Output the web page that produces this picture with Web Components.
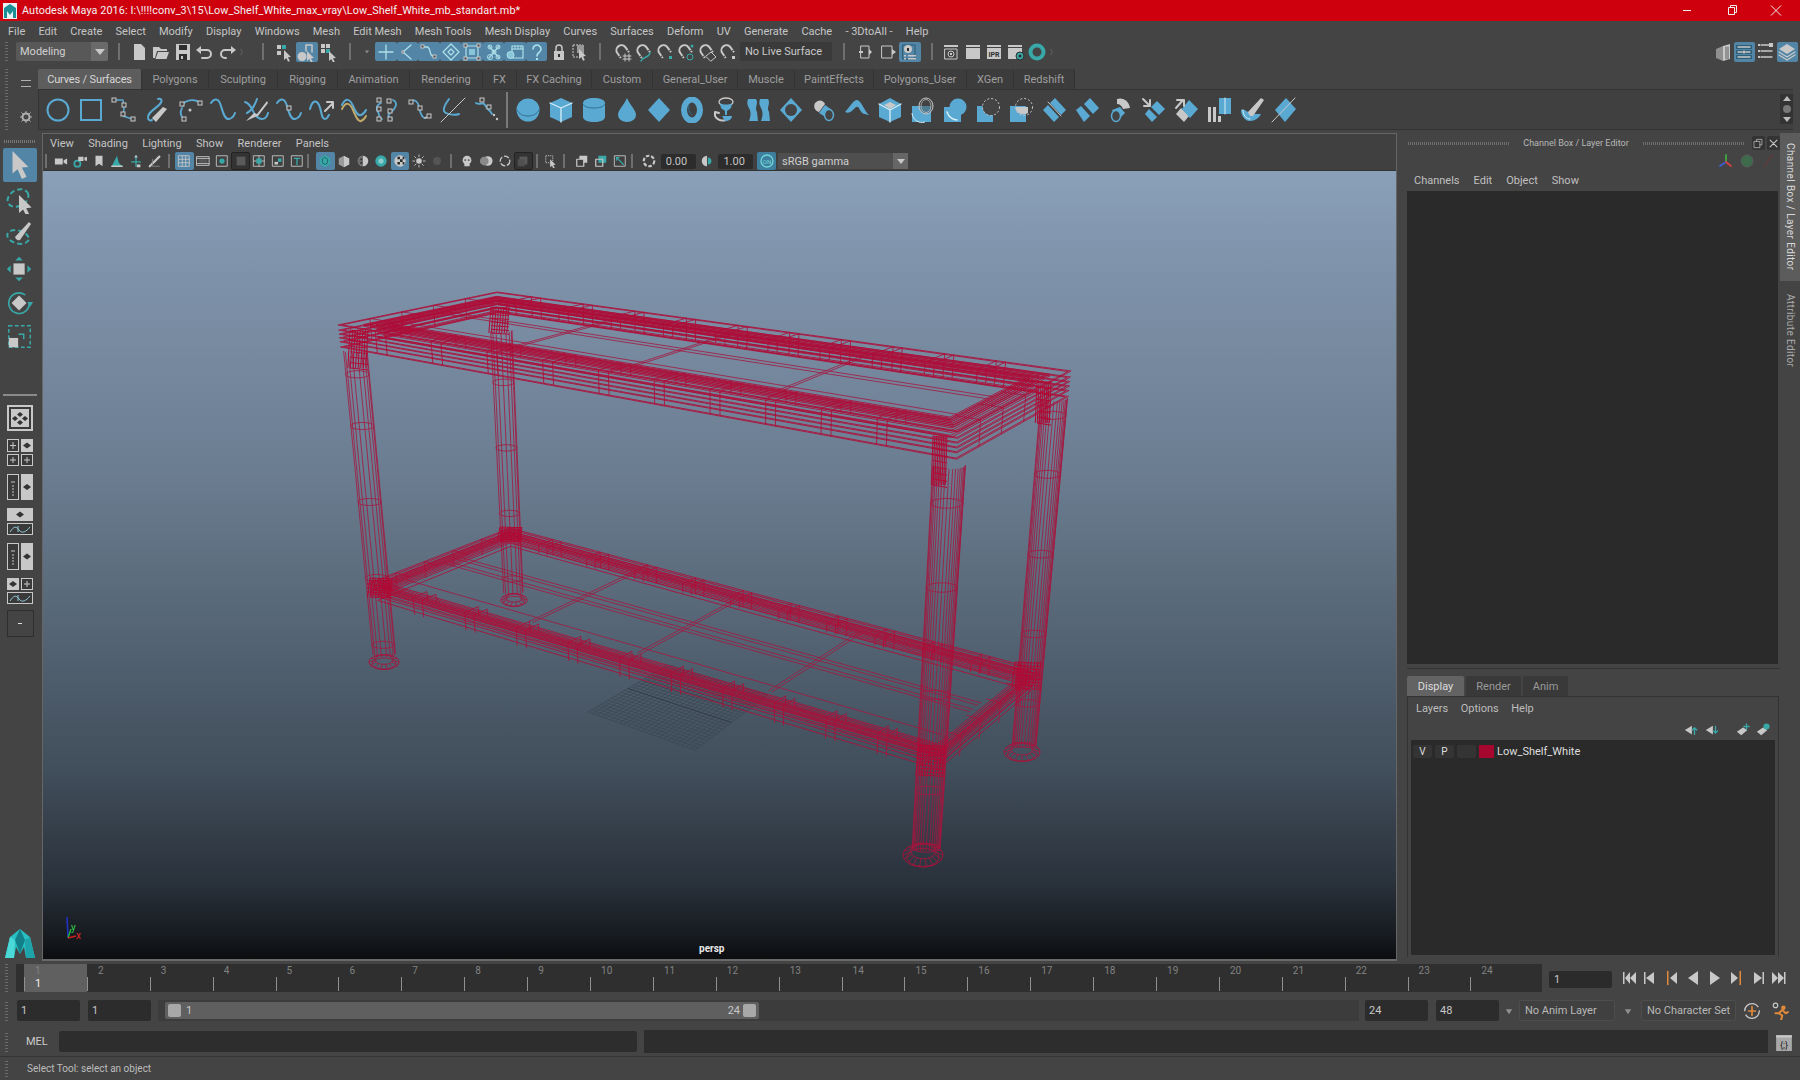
<!DOCTYPE html>
<html>
<head>
<meta charset="utf-8">
<title>Autodesk Maya 2016</title>
<style>
html, body { margin: 0; padding: 0; background: #444; }
body { width: 1800px; height: 1080px; overflow: hidden; font: 11px Roboto, "Liberation Sans", sans-serif; color: #c4c4c4; }
</style>
</head>
<body>
<m-app>
  <m-titlebar slot="title">Autodesk Maya 2016: I:\!!!!conv_3\15\Low_Shelf_White_max_vray\Low_Shelf_White_mb_standart.mb*</m-titlebar>
  <m-menubar slot="menu" items="File,Edit,Create,Select,Modify,Display,Windows,Mesh,Edit Mesh,Mesh Tools,Mesh Display,Curves,Surfaces,Deform,UV,Generate,Cache,- 3DtoAll -,Help"></m-menubar>
  <m-statusline slot="status"></m-statusline>
  <m-shelf slot="shelf"></m-shelf>
  <m-toolbox slot="tools"></m-toolbox>
  <m-viewport slot="view"></m-viewport>
  <m-sidepanel slot="side"></m-sidepanel>
  <m-vtabs slot="vtabs"></m-vtabs>
  <m-timeline slot="time"></m-timeline>
  <m-rangebar slot="range"></m-rangebar>
  <m-cmdline slot="cmd"></m-cmdline>
  <m-helpline slot="help">Select Tool: select an object</m-helpline>
</m-app>

<script>
const L = '#c8c8c8', B = '#5aa9d2', T = '#38a8a8', D = '#2e2e2e', O = '#e08a3c', TL = '#aee0ea';

// small svg builders, everything below is drawn in the icon's own unit box
const st = (d, c = B, w = 2) => `<path d="${d}" fill="none" stroke="${c}" stroke-width="${w}" stroke-linecap="round" stroke-linejoin="round"/>`;
const fl = (d, c = B) => `<path d="${d}" fill="${c}"/>`;
const kn = (x, y, s = 4) => `<rect x="${x}" y="${y}" width="${s}" height="${s}" fill="#444" stroke="${L}" stroke-width="1"/>`;
const cur = (x, y, k = 1) => `<path transform="translate(${x} ${y}) scale(${k})" d="M0 0l7 7-3 .3 1.800 3.600-1.700.8-1.800-3.600L0 10z" fill="${L}"/>`;
const magnet = () => `<path transform="rotate(-35 9 9)" d="M4 14V8a5 5 0 0 1 10 0v6" fill="none" stroke="${L}" stroke-width="2"/><path transform="rotate(-35 9 9)" d="M3 12h2M13 12h2" stroke="#444" stroke-width="1"/>`;

const ICONS = {
  // status line
  new: fl('M5 2h7l4 4v12H5z', L),
  open: fl('M2 5h6l2 2h6v2H6l-2 7H2z', L) + fl('M7 10h11l-2.500 7H4.500z', L),
  save: fl('M3 2h14v16H3z', L) + fl('M6 3h8v5H6zM6 12h8v6H6z', D) + fl('M8 14h2v3H8z', L),
  undo: st('M4 8h8a4 4 0 0 1 0 8H7', L, 2) + fl('M1 8l5-4v8z', L),
  redo: st('M16 8H8a4 4 0 0 0 0 8h1', L, 2) + fl('M19 8l-5-4v8z', L),
  collapse: st('M7 3l4 7-4 7', '#8a8a8a', 1),
  selh: fl('M2 3h4v4H2zM2 9h4v4H2z', L) + fl('M7 3h4v4H7z', T) + cur(9, 8),
  selo: fl('M5 10a4.500 4.500 0 1 0 .1 0z', L) + st('M9 9V3h6v7', L, 1.500) + cur(10, 9),
  selc: fl('M2 2h4v4H2zM7 2h4v4H7zM2 7h4v4H2z', L) + fl('M7 7h4v4H7z', T) + cur(10, 9),
  caret: fl('M7 8h6l-3 4z', '#8a8a8a'),
  bplus: st('M10 3v14M3 10h14', TL, 1.300),
  bchain: st('M13 3L5 10l8 7', TL, 1.300) + kn(4, 9, 2),
  bcurve: st('M4 5h4c4 0 2 9 6 9h2', TL, 1.300) + kn(2, 3, 3) + kn(14, 13, 3),
  bdiam: st('M10 2l8 8-8 8-8-8z', TL, 1.200) + st('M10 7l3 3-3 3-3-3z', TL, 1.200),
  bsurf: st('M4 4h12v12H4z', TL, 1.200) + fl('M7 7h6v6H7z', '#86c6d8') + kn(2, 2, 3) + kn(15, 2, 3) + kn(2, 15, 3) + kn(15, 15, 3),
  bdots: st('M5 4l10 12M15 4L5 16', TL, 1.200) + `<circle cx="6" cy="5" r="2" fill="none" stroke="${TL}"/><circle cx="14" cy="5" r="2" fill="none" stroke="${TL}"/><circle cx="6" cy="15" r="2.500" fill="none" stroke="${TL}"/><circle cx="14" cy="15" r="2" fill="none" stroke="${TL}"/><circle cx="10" cy="10" r="2" fill="none" stroke="${TL}"/>`,
  bclap: st('M7 4h11v12H7z', TL, 1.200) + st('M7 7h11M10 4v3M13 4v3M16 4v3', TL, 1) + `<circle cx="5.500" cy="13" r="3.500" fill="#86c6d8" stroke="${TL}"/>`,
  bhelp: st('M6 7a4 4 0 1 1 6 3.500c-1.500 1-2 1.500-2 3.500', TL, 1.600) + fl('M9 16h2v2H9z', TL),
  lock: st('M7 9V6a3 3 0 0 1 6 0v3', L, 1.500) + fl('M5 9h10v9H5z', L) + fl('M9 12h2v3H9z', D),
  selbox: `<rect x="3" y="3" width="10" height="12" fill="none" stroke="${L}" stroke-dasharray="2 1"/>` + fl('M7 3h7v8H7z', '#999') + cur(9, 7),
  snapgrid: magnet() + st('M12 12v7M16 12v7M10 14h8M10 17h8', L, 1),
  snapcurve: magnet() + st('M7 19c2-5 7-2 9-8', T, 1.400),
  snappoint: magnet() + fl('M14 14h3v3h-3z', T),
  snapview: magnet() + `<circle cx="16" cy="4" r="1.500" fill="${T}"/><circle cx="14" cy="15" r="3" fill="none" stroke="${T}"/>`,
  snapplane: magnet() + st('M9 14l5-4 5 5-5 4z', L, 1),
  snaplive: magnet() + fl('M14 14h3v3h-3z', L),
  hist: st('M4 4h8v12H4z', L, 1) + fl('M12 7l3 3-3 3z', L) + fl('M2 9h4v2H2z', L),
  hist2: st('M4 4h10v12H4z', L, 1) + fl('M14 7l4 3-4 3z', L),
  hist3: st('M3 3h12v14H3z', '#2b5a70', 1) + `<circle cx="8" cy="7" r="4" fill="${L}"/>` + fl('M7 6h2v3H7z', D) + fl('M4 13h2v1.500H4zM4 16h2v1.500H4zM8 13h8v1.500H8zM8 16h8v1.500H8z', L),
  rend1: fl('M3 3h14v2H3z', L) + st('M4 7h12v10H4z', L, 1) + `<circle cx="10" cy="12" r="3" fill="none" stroke="${L}"/>` + fl('M9 11h2v2H9z', L),
  rend2: fl('M3 3h14v2H3z', L) + fl('M3 6h14v11H3z', L),
  rend3: fl('M3 3h14v2H3z', L) + fl('M3 6h14v11H3z', L) + `<text x="10" y="15" font-size="7" font-weight="700" text-anchor="middle" fill="${D}" font-family="Roboto,sans-serif">IPR</text>`,
  rend4: fl('M2 3h14v2H2z', L) + fl('M2 6h14v11H2z', L) + `<circle cx="14" cy="14" r="4" fill="${T}" stroke="${D}"/><circle cx="14" cy="14" r="1.500" fill="${D}"/>`,
  ring: `<circle cx="10" cy="10" r="6.500" fill="none" stroke="${T}" stroke-width="4"/>`,
  wkcube: fl('M10 4l7-2v15l-7 2z', L) + fl('M3 7l7-3v15l-7-3z', '#8f8f8f') + st('M13 5v12M15 5v12', D, .7),
  wkch: fl('M2 3h16v4H2zM2 8h16v4H2zM2 13h16v4H2z', '#2e5f79') + st('M4 5h12M4 10h4M12 10h4M4 15h12', L, 1.400) + `<circle cx="10" cy="10" r="1.500" fill="${L}"/>`,
  wkattr: st('M5 3h11M5 9h11M5 15h11', L, 1.400) + fl('M2 2h2v2H2zM2 8h2v2H2zM2 14h2v2H2zM13 1h4v4h-4z', L),
  wklayer: fl('M10 2l8 5-8 5-8-5z', L) + st('M2 10l8 5 8-5M2 13l8 5 8-5', L, 1.300),

  // shelf, 26 unit box
  s_circle: `<circle cx="13" cy="13" r="10.500" fill="none" stroke="${B}" stroke-width="2"/>`,
  s_square: `<rect x="3" y="3" width="20" height="20" fill="none" stroke="${B}" stroke-width="2"/>`,
  s_cv: st('M4 3h8l1 8-1 8 9 3', B, 1.500) + kn(1, 1) + kn(11, 6) + kn(10, 15) + kn(20, 20),
  s_ep: st('M14 2c4-1 5 2 1 6s-12 8-11 13c.500 2 2 3 4 2', B, 2) + fl('M10 23l-2-2 11-11 4 2-11 13z', L),
  s_arc: st('M6 9c0-6 12-8 17-3', B, 1.800) + st('M5 11c-2 4-1 8 1 10', B, 1.800) + kn(3, 5) + kn(21, 4) + kn(5, 20) + `<circle cx="13" cy="13" r="1.500" fill="${L}"/>`,
  s_bez: st('M1 6c4-6 8-4 10 3s4 14 8 13 5-3 6-6', B, 2),
  s_knife: st('M2 5c3 1 6 4 8 9s6 8 9 8 5-2 6-6', B, 2) + st('M4 16c4-2 8-8 10-14', B, 2) + fl('M3 24l8-8 3 1 10-13 1 2-10 13-3 1z', L),
  s_bezk: st('M1 6c4-6 8-4 10 3s4 14 8 13 5-3 6-6', B, 2) + kn(11, 9),
  s_arrow: st('M1 12c2-8 6-10 9-4s2 14 6 14c3 0 2-2 4-4', B, 2) + st('M16 14l8-8M18 5h6v6', L, 2),
  s_dbl: st('M1 8c4-8 8-6 11 1s5 10 8 9 4-3 5-5', B, 2) + st('M1 12c4-8 8-6 11 1s5 12 8 11 4-3 5-5', '#c0a868', 2),
  s_hull: st('M7 6c-5 2-5 6-3 9s0 6 4 7', B, 1.800) + st('M19 3c6 3 2 9-2 12s-3 6 1 7', B, 1.800) + kn(3, 1) + kn(13, 2) + kn(3, 10) + kn(14, 12) + kn(3, 20) + kn(14, 20),
  s_spline: st('M3 5c5-4 8 0 9 5s3 11 6 11', B, 1.800) + st('M18 21l5-2', L, 1.500) + kn(2, 3) + kn(11, 9) + kn(20, 17),
  s_cross: st('M9 2c-3 4-6 9-5 12s10 5 15 3', B, 2) + st('M1 25L25 1', L, 1),
  s_break: st('M3 6c4 3 7-2 9 2s5 5 7 9', B, 1.800) + kn(7, 1) + kn(14, 8) + `<circle cx="21" cy="18" r="1.200" fill="${L}"/><circle cx="24" cy="22" r="1.200" fill="${L}"/>`,
  s_sphere: `<circle cx="13" cy="13" r="11.500" fill="${B}"/>` + st('M2 13c2 4 6 6 11 6s9-2 11-6', '#2f6f94', 1),
  s_cube: fl('M13 1l11 5v14l-11 5-11-5V6z') + st('M2 6l11 5 11-5M13 11v14', '#d6eef8', 1.300),
  s_cyl: fl('M2 6c0-3 5-5 11-5s11 2 11 5v14c0 3-5 5-11 5S2 23 2 20z') + st('M2 7c1 3 6 4 11 4s10-1 11-4', '#2f6f94', 1),
  s_cone: fl('M13 1c3 7 9 12 9 17a9 7 0 0 1-18 0c0-5 6-10 9-17z'),
  s_plane: fl('M13 1l11 12-11 12L2 13z'),
  s_torus: `<ellipse cx="13" cy="13" rx="8" ry="10.500" fill="none" stroke="${B}" stroke-width="6"/>` + st('M10 8c-1 4 0 8 3 10', '#2f6f94', 1),
  s_goblet: `<ellipse cx="14" cy="5" rx="7" ry="4" fill="none" stroke="${L}" stroke-width="1.300"/>` + fl('M8 6c2 2 10 2 12 0l-1 5-4 3v4h-2v-4l-4-3z') + st('M3 16c-1 5 5 9 11 7M3 19l0-4 4 1', L, 2) + fl('M10 19h10c0 3-3 5-7 5z'),
  s_bird: fl('M3 2h8c3 5-2 8 1 13l1 9H4c2-6 2-9 0-13s-2-5-1-9z') + fl('M15 2h8c3 5-2 8 1 13l1 9h-9c2-6 2-9 0-13s-2-5-1-9z'),
  s_nurbsq: fl('M13 1l11 12-11 12L2 13z') + `<ellipse cx="13" cy="13" rx="6" ry="6" fill="#444"/>`,
  s_tube: fl('M4 6c4-4 8-3 10 1l-6 8c-4-1-6-5-4-9z', L) + fl('M14 8l7 5-5 8-8-5z') + `<ellipse cx="18" cy="18" rx="4.500" ry="5.500" fill="#444" stroke="${B}" stroke-width="1.500"/>`,
  s_wing: fl('M1 15C6 10 9 3 13 3s8 12 12 15c-5-1-7-1-9-5s-3-4-6-1-6 5-9 3z'),
  s_hex: fl('M13 1l11 6v13l-11 5-11-5V7z') + fl('M13 5l6 3-6 4-6-4z', L) + fl('M3 8l9 5v11l-9-4z', B) + st('M2 7l11 6 11-6M13 13v12', '#d6eef8', 1.300),
  s_inter: fl('M2 9h19v16H2z') + `<path d="M2 16a10 10 0 0 0 13 9" fill="none" stroke="#d6eef8" stroke-width="1"/><ellipse cx="16" cy="9" rx="7" ry="8" fill="#444" fill-opacity=".45" stroke="${L}" stroke-width="1"/><ellipse cx="16" cy="9" rx="5" ry="6.500" fill="none" stroke="${L}" stroke-width=".7"/>`,
  s_union: fl('M2 10h17v15H2z') + `<circle cx="16" cy="10" r="8.500" fill="${B}"/>` + st('M5 15a12 12 0 0 0 10 8', '#d6eef8', 1.500),
  s_trim: fl('M2 9h16v16H2z') + `<circle cx="16" cy="10" r="8.500" fill="#444" stroke="${L}" stroke-width="1" stroke-dasharray="2 2"/>`,
  s_trim2: fl('M2 9h16v16H2z') + `<path d="M8 10h12v6a8.500 8.500 0 0 1-12-3z" fill="${L}"/><circle cx="16" cy="10" r="8.500" fill="none" stroke="${L}" stroke-width="1" stroke-dasharray="2 2"/>`,
  s_split: fl('M14 1l11 12-5 5L9 6z') + fl('M7 8l11 12-5 5L2 13z') + st('M7 5l13 14', L, 1),
  s_split2: fl('M16 1l9 10-6 6-9-10z') + fl('M7 9l9 10-6 6-8-12z'),
  s_blend: fl('M10 2c6-2 12 2 13 9l-7 1c-1-3-3-5-6-5z', L) + fl('M5 13l8-3 5 6-8 8z') + `<ellipse cx="9" cy="19" rx="4.500" ry="5.500" fill="#444" stroke="${B}" stroke-width="1.500"/>`,
  s_ins: fl('M17 4l8 8-6 6-8-8z') + fl('M9 12l8 8-5 5-7-8z') + st('M3 2l7 7M10 3v6H4', L, 2),
  s_ext: fl('M8 11l8 8-5 6-8-8z', L) + fl('M16 3l9 9-8 9-8-9z') + st('M3 11l7-8M4 3h7v6', L, 2),
  s_bars: fl('M13 1h12v16H13z') + st('M19 1v16', '#d6eef8', 1) + fl('M2 10h3v15H2zM7 10h3v15H7zM12 19h3v6h-3z', L),
  s_brush: `<path d="M2 13c0 6 4 11 9 11s9-3 11-7c-5 0-10 0-13-2s-5-3-7-2z" fill="${B}"/>` + st('M4 13c0 5 3 9 7 9', '#d6eef8', 1) + fl('M9 15L22 1l3 2L14 19c-2 1-4 0-5-4z', L),
  s_slash: fl('M15 1l10 11-11 13L4 13z') + st('M1 25L24 1', L, 1),

  // panel toolbar, 16 unit box
  p_cam: fl('M1 5h9v7H1zM11 7l4-2v7l-4-2z', L),
  p_cam2: `<circle cx="5" cy="11" r="3.500" fill="none" stroke="${T}" stroke-width="2"/>` + fl('M6 3h6v5H6zM13 4l3-1v5l-3-1z', L),
  p_mark: fl('M4 2h8v12l-4-3-4 3z', L),
  p_grid2: fl('M2 14l6-12 2 8 4 4z', T) + st('M2 14h12', L, 1.500),
  p_xf: st('M8 2v12M3 9h10', T, 1.500) + fl('M6 4l2-3 2 3zM9 12h4v3H9z', L),
  p_pen: st('M2 14L13 3', L, 2.500) + st('M5 6v8h8', '#888', 1),
  p_grid: st('M2 2h12v12H2zM2 6h12M2 10h12M6 2v12M10 2v12', L, 1),
  p_film: st('M1 3h14v10H1z', L, 1) + fl('M3 5h10v6H3z', '#555') + st('M1 5h14M1 11h14', L, 1),
  p_res: st('M2 2h12v12H2z', L, 1) + `<circle cx="8" cy="8" r="3" fill="${T}"/>`,
  p_blank: fl('M3 3h10v10H3z', '#5a5a5a'),
  p_cross: st('M2 2h12v12H2zM8 2v12M2 8h12', L, 1) + fl('M5 5h6v6H5z', T),
  p_pic: st('M2 2h12v12H2z', L, 1) + fl('M8 5h4v4H8z', T) + fl('M4 9h4v3H4z', L),
  p_t: st('M2 2h12v12H2z', L, 1) + st('M5 5h6M8 5v7', T, 1.500),
  p_sphwire: fl('M8 1l6 4v6l-6 4-6-4V5z', T) + st('M8 4l3 2v4l-3 2-3-2V6z', '#1d5a5f', 1),
  p_cubes: fl('M8 2l6 3v7l-6 3z', L) + fl('M8 2L2 5v7l6 3z', '#9b9b9b'),
  p_half: `<circle cx="8" cy="8" r="6" fill="${L}"/>` + fl('M8 2a6 6 0 0 0 0 12z', '#6e6e6e') + fl('M5 5h2v2H5zM5 9h2v2H5z', D),
  p_tex: `<circle cx="8" cy="8" r="6.500" fill="${T}"/><circle cx="8" cy="8" r="3" fill="#8fcdcd"/>`,
  p_check: `<circle cx="8" cy="8" r="6.500" fill="${L}"/>` + fl('M5 3h3v3H5zM8 6h3v3H8zM5 9h3v3H5zM11 3h2v3h-2zM11 9h2v3h-2z', D),
  p_light: `<circle cx="8" cy="8" r="3.200" fill="${L}"/>` + st('M8 1v2M8 13v2M1 8h2M13 8h2M3 3l1.500 1.500M13 3l-1.500 1.500M3 13l1.500-1.500M13 13l-1.500-1.500', L, 1),
  p_shad: `<circle cx="8" cy="8" r="4.500" fill="#555"/>`,
  p_skull: `<circle cx="8" cy="7" r="5" fill="${L}"/>` + fl('M5 11h6v3H5z', L) + fl('M5 6h2v2H5zM9 6h2v2H9z', '#666'),
  p_orb: `<circle cx="10" cy="8" r="5.500" fill="${L}"/><circle cx="6" cy="8" r="5" fill="#8a8a8a"/>`,
  p_arc: `<circle cx="8" cy="8" r="5.500" fill="none" stroke="${L}" stroke-width="1.500" stroke-dasharray="6 2"/>`,
  p_dark: fl('M4 3h9v9H4z', '#5a5a5a') + fl('M2 6h8v8H2z', '#505050'),
  p_iso: `<rect x="2" y="2" width="8" height="8" fill="none" stroke="${L}" stroke-dasharray="1.500 1"/>` + cur(7, 6, .9),
  p_two: fl('M5 2h9v8H5z', L) + fl('M2 6h8v8H2z', '#3e3e3e') + st('M2 6h8v8H2z', L, 1.400),
  p_two2: fl('M5 2h9v8H5z', T) + st('M2 6h8v8H2z', L, 1.400),
  p_expo: st('M2 2h12v12H2z', L, 1) + st('M4 4l8 8M4 4h3M4 4v3', T, 1.300),
  p_gainup: `<circle cx="8" cy="8" r="6" fill="none" stroke="${L}" stroke-width="2.500" stroke-dasharray="4 2"/>`,
  p_gain: fl('M8 2v12a6 6 0 0 1 0-12z', L) + fl('M9 4a4 4 0 0 1 0 8z', T),
  p_on: `<circle cx="8" cy="8" r="6" fill="none" stroke="#6fd6d6" stroke-width="1.300"/><text x="8" y="10.500" font-size="6" text-anchor="middle" fill="#6fd6d6" font-family="Roboto,sans-serif">ON</text>`,
  axis: st('M8 9V2', '#3f9f3f', 2) + st('M8 9l-6 4', '#3a5fd0', 2) + st('M8 9l5 4', '#d04040', 2),
  anim: `<circle cx="8" cy="8" r="6" fill="#3c6a4a" stroke="#5b5b5b"/>`,
  slashr: st('M4 14L12 2', '#703838', 1),
  // transport
  t_first: fl('M2 2h1.500v12H2zM9 2v12L4 8zM15 2v12L9 8z', L),
  t_prevk: fl('M2 2h1.500v12H2zM12 2v12L4 8z', L),
  t_prevkey: fl('M3 1h1.500v14H3z', O) + fl('M13 2v12L6 8z', L),
  t_back: fl('M13 1v14L3 8z', L),
  t_play: fl('M3 1v14l10-7z', L),
  t_nextkey: fl('M3 2v12l7-6z', L) + fl('M11.500 1H13v14h-1.500z', O),
  t_nextk: fl('M4 2v12l8-6zM12.500 2H14v12h-1.500z', L),
  t_last: fl('M1 2v12l6-6zM7 2v12l6-6zM13 2h1.500v12H13z', L),
  autokey: `<circle cx="8" cy="8" r="6.500" fill="none" stroke="${L}" stroke-width="1.200" stroke-dasharray="17 3"/>` + st('M5 8h6M8 4v8', O, 1.500),
  runner: `<circle cx="4" cy="3" r="2" fill="none" stroke="${L}"/>` + `<circle cx="11" cy="5" r="2" fill="${O}"/>` + st('M10 7L7 10l3 2-1 4M10 7l3 3 2-1M7 10l-3 0', O, 1.800),
  script: fl('M1 2h14v14H1z', '#a8a8a8') + fl('M1 2h14v2H1z', L) + `<text x="8" y="13" font-size="8" text-anchor="middle" fill="#222" font-family="Roboto,sans-serif">{;}</text>`,
  float: st('M2 5h8v9H2z', L, 1) + st('M5 5V2h8v8h-3', L, 1),
  close: st('M3 3l10 10M13 3L3 13', L, 1.600),
  tri: fl('M3 5h10l-5 8z', '#909090'),
  l_up: fl('M1 8l8-5v10z', L) + st('M12 13V6M9.500 8L12 5.500 14.500 8', T, 1.500),
  l_down: fl('M1 8l8-5v10z', L) + st('M12 4v7M9.500 9l2.500 2.500L14.500 9', T, 1.500),
  l_new: fl('M1 10l7-5 5 3-7 6z', L) + st('M12 1v6M9 4h6', T, 1.500),
  l_sel: fl('M1 10l7-5 5 3-7 6z', L) + `<circle cx="12" cy="4" r="3.500" fill="${T}"/>`,
  // tool box
  t_lasso: `<ellipse cx="13" cy="14" rx="11" ry="8" transform="rotate(-28 13 14)" fill="none" stroke="${T}" stroke-width="2" stroke-dasharray="5 3"/>` + cur(14, 11, 1.800),
  t_paint: `<ellipse cx="13" cy="18" rx="11" ry="6.500" transform="rotate(15 13 18)" fill="none" stroke="${T}" stroke-width="2" stroke-dasharray="5 3"/>` + fl('M10 18L24 3l2 2-11 16c-3 1-4-1-5-3z', L),
  t_move: fl('M8 9h12v12H8z', L) + fl('M14 2l4 4h-8zM14 28l4-4h-8zM1 15l4-4v8zM27 15l-4-4v8z', T),
  t_rotate: st('M25 15a11 11 0 1 1-5-9', T, 1.800) + fl('M23 14h6l-3 5z', T) + fl('M14 7l8 8-8 8-8-8z', L),
  t_scale: `<rect x="3" y="3" width="23" height="23" fill="none" stroke="${T}" stroke-width="1.600" stroke-dasharray="4 2.500"/>` + st('M14 12h5v5', T, 1.600) + fl('M3 16h10v10H3z', L),
};

class MIcon extends HTMLElement {
  connectedCallback() {
    const box = this.getAttribute('box') || 20;
    const size = this.getAttribute('size') || box;
    const name = this.getAttribute('name');
    const root = this.shadowRoot || this.attachShadow({mode: 'open'});
    root.innerHTML = `<style>
      :host { display: inline-flex; align-items: center; justify-content: center; flex: none; width: var(--w, ${size}px); height: var(--h, ${size}px); }
      :host([on]) { background: #5285a6; border-radius: 2px; }
      :host([teal]) { background: #3f7f9e; border-radius: 2px; }
      :host([dark]) { background: #333; border: 1px solid #222; box-sizing: border-box; border-radius: 2px; }
      svg { display: block; }
    </style><svg width="${size}" height="${size}" viewBox="0 0 ${box} ${box}">${ICONS[name] || ''}</svg>`;
  }
}
customElements.define('m-icon', MIcon);

// builds a run of icons: "name name:on name:dark"
const run = (list, box, size) => list.trim().split(/\s+/).map(s => {
  const [n, f] = s.split(':');
  return `<m-icon name="${n}" box="${box}" size="${size || box}" ${f || ''}></m-icon>`;
}).join('');

const HANDLE = `repeating-linear-gradient(0deg, #6a6a6a 0 1px, transparent 1px 3px)`;

class MApp extends HTMLElement {
  constructor() {
    super();
    this.attachShadow({mode: 'open'}).innerHTML = `<style>
      :host { display: flex; flex-direction: column; width: 1800px; height: 1080px; background: #444; }
      .work { display: flex; height: 828px; margin-top: 3px; }
    </style>
    <slot name="title"></slot><slot name="menu"></slot><slot name="status"></slot><slot name="shelf"></slot>
    <div class="work"><slot name="tools"></slot><slot name="view"></slot><slot name="side"></slot><slot name="vtabs"></slot></div>
    <slot name="time"></slot><slot name="range"></slot><slot name="cmd"></slot><slot name="help"></slot>`;
  }
}
customElements.define('m-app', MApp);

class MTitlebar extends HTMLElement {
  constructor() {
    super();
    this.attachShadow({mode: 'open'}).innerHTML = `<style>
      :host { display: flex; align-items: center; height: 21px; background: #cf000e; color: #f2f2f2; font-size: 10.800px; letter-spacing: .1px; padding-right: 2px; }
      .logo { margin: 0 5px 0 3px; }
      .txt { flex: 1; }
      .win { display: flex; align-items: center; }
      .win svg { display: block; width: 44px; height: 21px; }
    </style>
    <svg class="logo" width="14" height="16" viewBox="0 0 14 16"><path d="M0 0h14v16H0z" fill="#e8f2f2"/><path d="M1 15V5l6-4 6 4v10h-3V8L7 12 4 8v7z" fill="#1a8f96"/></svg>
    <span class="txt"><slot></slot></span>
    <div class="win">
      <svg viewBox="0 0 44 21"><path d="M17 10.500h8" stroke="#eee" stroke-width="1"/></svg>
      <svg viewBox="0 0 44 21"><path d="M18.500 7.500h6v7h-6zM20.500 7.500v-2h6v7h-2" fill="none" stroke="#eee"/></svg>
      <svg viewBox="0 0 44 21"><path d="M17 5.500l10 10M27 5.500l-10 10" stroke="#eee" stroke-width="1"/></svg>
    </div>`;
  }
}
customElements.define('m-titlebar', MTitlebar);

class MMenubar extends HTMLElement {
  connectedCallback() {
    const items = this.getAttribute('items').split(',');
    this.attachShadow({mode: 'open'}).innerHTML = `<style>
      :host { display: flex; align-items: center; height: 20px; padding-left: 8px; gap: 13.200px; font-size: 11px; color: #c6c6c6; white-space: nowrap; }
    </style>` + items.map(i => `<span>${i}</span>`).join('');
  }
}
customElements.define('m-menubar', MMenubar);

class MStatusline extends HTMLElement {
  constructor() {
    super();
    const sep = (l, r = l) => `<i class="sep" style="margin:0 ${r}px 0 ${l}px"></i>`;
    this.attachShadow({mode: 'open'}).innerHTML = `<style>
      :host { display: flex; align-items: center; height: 21px; margin-bottom: 7px; padding-left: 5px; position: relative; }
      .h { width: 3px; height: 19px; background: ${HANDLE}; margin-right: 8px; }
      .mode { display: flex; width: 92px; height: 19px; background: #585858; align-items: center; padding-left: 4px; box-sizing: border-box; color: #d0d0d0; border-radius: 2px; }
      .mode span { flex: 1; }
      .mode b { width: 17px; height: 19px; background: #6a6a6a; display: flex; align-items: center; justify-content: center; border-radius: 0 2px 2px 0; }
      .mode b::after { content: ""; border: 5px solid transparent; border-top: 6px solid #c8c8c8; border-bottom: 0; }
      .sep { display: block; flex: none; width: 2px; height: 17px; background: #6f6f6f; }
      .g { display: flex; align-items: center; }
      .g m-icon { --w: 21.500px; }
      .g.f m-icon { --w: 22px; }
      .g.s m-icon { --w: 21px; }
      .field { width: 92px; height: 19px; background: #3a3a3a; color: #c8c8c8; line-height: 19px; padding-left: 5px; box-sizing: border-box; margin-left: 2px; border-radius: 2px; }
      .sp { flex: 1; }
    </style>
    <i class="h"></i>
    <div class="mode"><span>Modeling</span><b></b></div>
    ${sep(10)}
    <div class="g f" style="margin-left:-2px">${run('new open save undo redo', 20)}</div>
    <m-icon name="collapse" box="20" style="--w:8px"></m-icon>
    ${sep(16)}
    <div class="g f" style="margin-left:-6px">${run('selh selo:on selc', 20)}</div>
    ${sep(9)}
    <m-icon name="caret" box="20" style="--w:14px"></m-icon>
    <div class="g" style="margin-left:1px">${run('bplus:on bchain:on bcurve:on bdiam:on bsurf:on bdots:on bclap:on bhelp:on', 19)}</div>
    <div class="g s" style="margin-left:1px">${run('lock selbox', 20)}</div>
    ${sep(9)}
    <div class="g s" style="margin-left:2px">${run('snapgrid snapcurve snappoint snapview snapplane snaplive', 20)}</div>
    <div class="field">No Live Surface</div>
    ${sep(11, 11)}
    <div class="g">${run('hist hist2 hist3:on', 20)}</div>
    ${sep(10, 8)}
    <div class="g">${run('rend1 rend2 rend3 rend4 ring', 20)}</div>
    <m-icon name="collapse" box="20" style="--w:8px"></m-icon>
    <span class="sp"></span>
    <div class="g" style="margin-right:2px">${run('wkcube wkch:on wkattr wklayer:on', 20)}</div>`;
  }
}
customElements.define('m-statusline', MStatusline);

class MShelf extends HTMLElement {
  constructor() {
    super();
    const tabs = [['Curves / Surfaces', 104], ['Polygons', 67], ['Sculpting', 69], ['Rigging', 60], ['Animation', 72], ['Rendering', 73], ['FX', 34], ['FX Caching', 75], ['Custom', 61], ['General_User', 85], ['Muscle', 57], ['PaintEffects', 79], ['Polygons_User', 93], ['XGen', 47], ['Redshift', 61]];
    const a = 's_circle s_square s_cv s_ep s_arc s_bez s_knife s_bezk s_arrow s_dbl s_hull s_spline s_cross s_break';
    const b = 's_sphere s_cube s_cyl s_cone s_plane s_torus s_goblet s_bird s_nurbsq s_tube s_wing s_hex s_inter s_union s_trim s_trim2 s_split s_split2 s_blend s_ins s_ext s_bars s_brush s_slash';
    this.attachShadow({mode: 'open'}).innerHTML = `<style>
      :host { display: grid; grid-template-columns: 38px 1fr; grid-template-rows: 20px 41px; height: 61px; }
      .side { grid-row: 1 / 3; display: flex; flex-direction: column; align-items: center; position: relative; padding-left: 13px; box-sizing: border-box; }
      .side::before { content: ""; position: absolute; left: 5px; top: 0; bottom: 0; width: 3px; background: ${HANDLE}; }
      .ham { width: 10px; height: 5px; border-top: 1px solid #b0b0b0; border-bottom: 1px solid #b0b0b0; margin-top: 11px; }
      .gear { margin-top: 24px; }
      .tabs { display: flex; align-items: flex-end; }
      .tab { height: 20px; background: #3c3c3c; color: #9f9f9f; display: flex; align-items: center; justify-content: center; box-sizing: border-box; border-right: 1px solid #333; padding-top: 1px; border-radius: 2px 2px 0 0; }
      .tab.on { background: #5d5d5d; color: #d6d6d6; letter-spacing: -.15px; }
      .row { display: flex; align-items: center; background: #404040; border: 1px solid #333; border-width: 1px 0 1px 1px; padding-left: 3px; position: relative; margin-right: 7px; }
      .ic { display: flex; align-items: center; }
      .ic m-icon { --w: 32.900px; }
      .div { width: 2px; height: 36px; background: #7a7a7a; margin: 0 3px 0 4px; }
      .scroll { position: absolute; right: 0; top: 4px; width: 13px; height: 30px; display: flex; flex-direction: column; align-items: center; justify-content: space-between; background: #333; padding: 2px 0; box-sizing: border-box; }
      .scroll i { display: block; width: 0; border: 4px solid transparent; }
      .scroll .u { border-bottom: 5px solid #bbb; border-top: 0; }
      .scroll .d { border-top: 5px solid #bbb; border-bottom: 0; }
      .scroll .c { width: 8px; height: 8px; background: #777; border: 0; border-radius: 50%; }
    </style>
    <div class="side"><div class="ham"></div><svg class="gear" width="12" height="12" viewBox="0 0 12 12"><circle cx="6" cy="6" r="3.500" fill="none" stroke="#b0b0b0" stroke-width="2"/><path d="M6 0v2M6 10v2M0 6h2M10 6h2M1.500 1.500L3 3M9 9l1.500 1.500M1.500 10.500L3 9M9 3l1.500-1.500" stroke="#b0b0b0"/></svg></div>
    <div class="tabs">${tabs.map((t, i) => `<div class="tab${i ? '' : ' on'}" style="width:${t[1]}px">${t[0]}</div>`).join('')}</div>
    <div class="row"><div class="ic">${run(a, 26)}</div><div class="div"></div><div class="ic">${run(b, 26)}</div>
      <div class="scroll"><i class="u"></i><i class="c"></i><i class="d"></i></div></div>`;
  }
}
customElements.define('m-shelf', MShelf);

class MToolbox extends HTMLElement {
  constructor() {
    super();
    const pane = (w, h, inner = '') => `<svg width="${w}" height="${h}" viewBox="0 0 ${w} ${h}" style="display:block">${inner}</svg>`;
    const cell = (x, y, w, h, kind) => {
      const dia = `<path d="M${x + w / 2 - 4} ${y + h / 2}l4-3 4 3-4 3z" fill="#333"/>`;
      if (kind === 'f') return `<rect x="${x}" y="${y}" width="${w}" height="${h}" fill="#c8c8c8"/>${dia}`;
      if (kind === 'p') return `<rect x="${x + .5}" y="${y + .5}" width="${w - 1}" height="${h - 1}" fill="#3a3a3a" stroke="#c8c8c8"/><path d="M${x + w / 2} ${y + 3}v${h - 6}M${x + 3} ${y + h / 2}h${w - 6}" stroke="#c8c8c8"/>`;
      if (kind === 'l') return `<rect x="${x + .5}" y="${y + .5}" width="${w - 1}" height="${h - 1}" fill="#3a3a3a" stroke="#c8c8c8"/><path d="M${x + 4} ${y + 8}h${w - 8}M${x + 5} ${y + 12}h${w - 10}M${x + 5} ${y + 15}h${w - 10}M${x + 5} ${y + 18}h${w - 10}M${x + 5} ${y + 21}h${w - 10}" stroke="#c8c8c8"/>`;
      if (kind === 'g') return `<rect x="${x + .5}" y="${y + .5}" width="${w - 1}" height="${h - 1}" fill="#3a3a3a" stroke="#c8c8c8"/><path d="M${x + 3} ${y + h - 3}c4-6 6-6 9-2s7 2 ${w - 15}-3M${x + 11} ${y + 3}v${h - 6}" fill="none" stroke="#8fc8d8"/>`;
      return '';
    };
    this.attachShadow({mode: 'open'}).innerHTML = `<style>
      :host { display: flex; flex-direction: column; align-items: center; width: 42px; box-sizing: border-box; padding: 0 2px 0 0; position: relative; flex: none; }
      .h { width: 32px; height: 3px; margin-top: 7px; background: repeating-linear-gradient(90deg, #777 0 1px, transparent 1px 2px); }
      .tools { display: flex; flex-direction: column; align-items: center; margin-top: 5px; }
      .t { display: flex; align-items: center; justify-content: center; width: 34px; height: 34px; }
      .t.on { background: #5285a6; border-radius: 2px; }
      .rule { width: 34px; height: 2px; background: #8a8a8a; margin-top: 40px; }
      .lay { display: flex; flex-direction: column; align-items: center; gap: 8px; margin-top: 9px; }
      .more { width: 27px; height: 27px; border: 1px solid #2e2e2e; box-sizing: border-box; display: flex; align-items: center; justify-content: center; margin-top: 6px; }
      .more::after { content: ""; width: 4px; height: 1px; background: #ddd; }
      .logo { margin-top: auto; margin-bottom: 3px; }
    </style>
    <div class="h"></div>
    <div class="tools">
      <div class="t on"><svg width="20" height="30" viewBox="0 0 20 32"><path d="M2 1l17 17-7 .6 5 10-5 2.400-4.600-10.400L2 25z" fill="#c8c8c8"/></svg></div>
      <div class="t" style="height:33px"><m-icon name="t_lasso" box="30" size="30"></m-icon></div>
      <div class="t" style="height:37px"><m-icon name="t_paint" box="30" size="30"></m-icon></div>
      <div class="t" style="height:33px"><m-icon name="t_move" box="30" size="28"></m-icon></div>
      <div class="t" style="height:35px"><m-icon name="t_rotate" box="30" size="28"></m-icon></div>
      <div class="t" style="height:34px"><m-icon name="t_scale" box="30" size="28"></m-icon></div>
    </div>
    <div class="rule"></div>
    <div class="lay">
      ${pane(26, 26, `<rect x="1" y="1" width="24" height="24" fill="#3a3a3a" stroke="#c8c8c8" stroke-width="2"/><rect x="4" y="4" width="18" height="18" fill="#c8c8c8"/><path d="M13 7l3 2.500-3 2.500-3-2.500zM8 11l3 2.500-3 2.500-3-2.500zM18 11l3 2.500-3 2.500-3-2.500zM13 15l3 2.500-3 2.500-3-2.500z" fill="#333"/>`)}
      ${pane(26, 27, cell(0, 0, 12, 13, 'p') + cell(14, 0, 12, 13, 'f') + cell(0, 15, 12, 12, 'p') + cell(14, 15, 12, 12, 'p'))}
      ${pane(26, 26, cell(0, 0, 12, 26, 'l') + cell(14, 0, 12, 26, 'f'))}
      ${pane(26, 27, cell(0, 0, 26, 13, 'f') + cell(0, 15, 26, 12, 'g'))}
      ${pane(26, 27, cell(0, 0, 12, 27, 'l') + cell(14, 0, 12, 27, 'f'))}
      ${pane(26, 26, cell(0, 0, 12, 12, 'f') + cell(14, 0, 12, 12, 'p') + cell(0, 14, 26, 12, 'g'))}
    </div>
    <div class="more"></div>
    <svg class="logo" width="32" height="29" viewBox="0 0 32 29">
      <path d="M16 0l10 8 5 21h-9l-2-11-4 7-4-7-2 11H1L6 8z" fill="#29bfc2"/>
      <path d="M16 0l-5 11 5 14 5-14z" fill="#137f88"/><path d="M6 8l5 3-1 18H1z" fill="#4ad9d6"/><path d="M26 8l-5 3 1 18h9z" fill="#1fa3aa"/>
    </svg>`;
  }
}
customElements.define('m-toolbox', MToolbox);

// table wireframe, in page coordinates so it can be read against the reference
function tableWireframe() {
  const lerp = (a, b, t) => [a[0] + (b[0] - a[0]) * t, a[1] + (b[1] - a[1]) * t];
  const TOP = {A: [338, 325], D: [958, 432], B: [497, 292], C: [1071, 371]};
  const BOT = {A: [367, 584], D: [941, 752], B: [510, 528], C: [1040, 670]};
  const bil = (c, u, v) => lerp(lerp(c.A, c.D, u), lerp(c.B, c.C, u), v);
  const f = p => p[0].toFixed(1) + ' ' + p[1].toFixed(1);
  let d = '', dl = '';
  const line = (a, b) => { d += `M${f(a)}L${f(b)}`; };
  const thin = (a, b) => { dl += `M${f(a)}L${f(b)}`; };
  const ell = (c, rx, ry) => {
    const pts = [];
    for (let i = 0; i <= 24; i++) {
      const a = i / 24 * Math.PI * 2;
      pts.push(f([c[0] + rx * Math.cos(a), c[1] + ry * Math.sin(a)]));
    }
    return 'M' + pts.join('L');
  };

  function shelf(fn, o) {
    const K = .26;
    // beams along the long side, then along the short side
    o.beam.forEach(([vo, h]) => {
      const uo = vo * K;
      line(fn(uo, vo, h), fn(1 - uo, vo, h));
      line(fn(uo, 1 - vo, h), fn(1 - uo, 1 - vo, h));
      line(fn(uo, vo, h), fn(uo, 1 - vo, h));
      line(fn(1 - uo, vo, h), fn(1 - uo, 1 - vo, h));
    });
    // little boxes across the beams
    o.rungs.forEach(t => {
      [0, 1].forEach(side => {
        const v = w => side ? 1 - w : w;
        [t, t + .016].forEach(u => {
          line(fn(u, v(0), 0), fn(u, v(0), o.H));
          line(fn(u, v(o.W), 0), fn(u, v(o.W), o.H * .5));
          line(fn(u, v(0), 0), fn(u, v(o.W), 0));
        });
      });
    });
    [.2, .4, .6, .8].forEach(s => {
      [0, 1].forEach(side => {
        const u = side ? 1 - o.W * K : o.W * K;
        const u0 = side ? 1 : 0;
        thin(fn(u0, s, 0), fn(u0, s, o.H));
        thin(fn(u0, s, 0), fn(u, s, 0));
      });
    });
    // inner panel
    o.cross.forEach(u => {
      [u, u + .006].forEach(x => thin(fn(x, o.W, 0), fn(x, 1 - o.W, 0)));
    });
    o.along.forEach(v => {
      thin(fn(o.W * K, v, 0), fn(1 - o.W * K, v, 0));
    });
  }

  const topFn = (u, v, h) => lerp(bil(TOP, u, v), bil(BOT, u, v), h);
  const botFn = (u, v, h) => {
    const a = bil(BOT, u, v), b = bil(TOP, u, v);
    return [a[0] + (a[0] - b[0]) * h, a[1] + (a[1] - b[1]) * h];
  };
  const dup = (arr, hs) => arr.flatMap(v => hs.map(h => [v, h]));
  shelf(topFn, {
    beam: [...dup([0, .012], [0, .02, .035, .05, .065, .085]), ...dup([.08, .1, .12, .14, .155, .17], [0, .006]), ...dup([.12, .14], [.02, .035, .05])],
    rungs: [.06, .15, .24, .33, .42, .51, .6, .69, .78, .87],
    cross: [.25, .44, .68], along: [.48, .52, .22, .78], W: .16, H: .085,
  });
  shelf(botFn, {
    beam: [...dup([0, .015, .035, .05, .065], [0, .015, .03]), ...dup([.03], [.05, .065])],
    rungs: [.08, .17, .26, .35, .44, .53, .62, .71, .8, .89],
    cross: [.26, .45, .68], along: [.44, .47, .52, .55, .16, .84], W: .1, H: .065,
  });

  function leg(top, bot, rt, rb, n, rings, foot, arcs) {
    for (let i = 0; i < n; i++) {
      const a = i / n * Math.PI;
      const k = Math.cos(a);
      const s = k < 0 ? -1 : 1;
      const kk = s * Math.pow(Math.abs(k), .85);
      thin([top[0] + rt * kk, top[1] + rt * .25 * Math.sin(a)], [bot[0] + rb * kk, bot[1] + rb * .25 * Math.sin(a)]);
    }
    rings.forEach(t => {
      const c = lerp(top, bot, t);
      dl += ell(c, rt + (rb - rt) * t, (rt + (rb - rt) * t) * .3);
    });
    // foot with radial spokes
    d += ell(foot.c, foot.rx, foot.ry);
    dl += ell([foot.c[0], foot.c[1] - foot.ry * .3], foot.rx * .62, foot.ry * .62);
    dl += ell([foot.c[0], foot.c[1] + foot.ry * .2], foot.rx * .8, foot.ry * .75);
    for (let i = 0; i < arcs; i++) {
      const a = i / arcs * Math.PI * 2;
      thin([foot.c[0] + foot.rx * .55 * Math.cos(a), foot.c[1] - foot.ry * .3 + foot.ry * .55 * Math.sin(a)], [foot.c[0] + foot.rx * Math.cos(a), foot.c[1] + foot.ry * Math.sin(a)]);
    }
  }
  leg([355, 350], [384, 654], 12, 11.500, 9, [.08, .25, .5, .75, .97], {c: [384, 662], rx: 15, ry: 7.500}, 14);
  leg([501, 330], [513, 592], 11, 10, 8, [.2, .45, .7, .95], {c: [514, 600], rx: 13, ry: 6.500}, 14);
  leg([949, 465], [926, 848], 16.500, 14, 18, [.1, .32, .6, .85, 1], {c: [923, 855], rx: 20, ry: 12}, 18);
  leg([1054, 398], [1024, 745], 13.500, 12, 16, [.05, .22, .45, .68, .88], {c: [1022, 752], rx: 18, ry: 9.500}, 16);

  // heavy knots where the legs meet the frames
  let knots = '';
  const knot = (x, y, w, h, n) => {
    for (let i = 0; i <= n; i++) {
      knots += `M${x + w * i / n} ${y}l${-w * .12} ${h}`;
      knots += `M${x} ${y + h * i / n}l${w} ${h * .05}`;
    }
  };
  knot(350, 330, 18, 38, 7); knot(491, 307, 18, 26, 7); knot(1037, 381, 14, 42, 7); knot(933, 436, 14, 49, 8);
  knot(370, 578, 22, 19, 8); knot(500, 527, 22, 14, 8); knot(1015, 662, 26, 26, 8); knot(919, 745, 26, 30, 9);

  // ground grid
  const G = {A: [588, 712], B: [668, 665], D: [695, 750], C: [768, 695]};
  let g = '';
  for (let i = 0; i <= 24; i++) {
    const t = i / 24;
    g += `M${f(lerp(G.A, G.B, t))}L${f(lerp(G.D, G.C, t))}M${f(lerp(G.A, G.D, t))}L${f(lerp(G.B, G.C, t))}`;
  }
  return `
    <path d="${g}" fill="none" stroke="#3a444e" stroke-width=".7" opacity=".9"/>
    <path d="M${f(lerp(G.A, G.B, .5))}L${f(lerp(G.D, G.C, .5))}" stroke="#333b44" stroke-width=".9"/>
    <path d="${dl}" fill="none" stroke="#a5173f" stroke-width=".8"/>
    <path d="${d}" fill="none" stroke="#ad0d38" stroke-width=".85"/>
    <path d="${knots}" fill="none" stroke="#b00a34" stroke-width="1"/>`;
}

class MViewport extends HTMLElement {
  constructor() {
    super();
    const menus = ['View', 'Shading', 'Lighting', 'Show', 'Renderer', 'Panels'];
    const sep = (l, r) => `<i class="sep" style="margin:0 ${r}px 0 ${l}px"></i>`;
    this.attachShadow({mode: 'open'}).innerHTML = `<style>
      :host { display: flex; flex-direction: column; flex: none; width: 1355px; height: 828px; box-sizing: border-box; border: 1px solid #666; border-bottom: 2px solid #6a6a6a; background: #404040; }
      .menu { display: flex; gap: 14.400px; height: 18px; align-items: center; padding: 0 0 0 7px; color: #c4c4c4; }
      .bar { display: flex; height: 18px; align-items: center; padding-left: 2px; border-bottom: 1px solid #333; flex: none; }
      .sep { display: block; flex: none; width: 2px; height: 14px; background: #6f6f6f; }
      .g { display: flex; align-items: center; }
      .g m-icon { --w: 18.700px; --h: 18px; }
      .num { width: 35px; height: 15px; background: #2c2c2c; color: #c4c4c4; line-height: 15px; padding-left: 5px; box-sizing: border-box; border-radius: 2px; margin-left: 2px; }
      .gamma { display: flex; width: 130px; height: 16px; background: #4f4f4f; align-items: center; padding-left: 4px; box-sizing: border-box; color: #d0d0d0; margin-left: 2px; }
      .gamma span { flex: 1; }
      .gamma b { width: 15px; height: 16px; background: #666; display: flex; align-items: center; justify-content: center; }
      .gamma b::after { content: ""; border: 4px solid transparent; border-top: 5px solid #c8c8c8; border-bottom: 0; }
      .canvas { flex: 1; position: relative; overflow: hidden; background: linear-gradient(#8aa0b9 0, #7c90a7 15%, #6b7d91 38%, #556575 58%, #414e5b 76%, #2a323c 90%, #171b20 97%, #0b0d0f 100%); }
      svg.wire { position: absolute; left: 0; top: 0; }
      .persp { position: absolute; left: 656px; bottom: 5px; font-weight: 700; font-size: 10px; color: #e8e8e8; }
    </style>
    <div class="menu">${menus.map(m => `<span>${m}</span>`).join('')}</div>
    <div class="bar">
      ${sep(0, 5)}
      <div class="g">${run('p_cam p_cam2 p_mark p_grid2 p_xf p_pen', 16, 14)}</div>${sep(4, 5)}
      <div class="g">${run('p_grid:on p_film p_res p_blank:dark p_cross p_pic p_t', 16, 14)}</div>${sep(1.500, 6.500)}
      <div class="g">${run('p_sphwire:on p_cubes p_half p_tex p_check:on p_light p_shad', 16, 14)}</div>${sep(3.500, 5.600)}
      <div class="g">${run('p_skull p_orb p_arc p_dark:dark', 16, 14)}</div>${sep(3, 4.500)}
      <div class="g">${run('p_iso', 16, 14)}</div>${sep(2.700, 7.600)}
      <div class="g">${run('p_two p_two2 p_expo', 16, 14)}</div>${sep(2.300, 6.600)}
      <div class="g">${run('p_gainup', 16, 14)}</div><div class="num">0.00</div>
      <div class="g" style="margin-left:2px">${run('p_gain', 16, 14)}</div><div class="num">1.00</div>
      <div class="g" style="margin-left:4px">${run('p_on:teal', 16, 16)}</div>
      <div class="gamma"><span>sRGB gamma</span><b></b></div>
    </div>
    <div class="canvas">
      <svg class="wire" width="1353" height="789" viewBox="43 171 1353 789">
        ${tableWireframe()}
        <path d="M67 917l1 20" stroke="#2233cc" stroke-width="1.500"/><path d="M68 938l3-9" stroke="#22c040" stroke-width="1.300"/><path d="M68 938l8-2" stroke="#d02020" stroke-width="1.300"/>
        <text x="71" y="931" fill="#35d050" font-size="10" font-family="Roboto, sans-serif">y</text>
        <text x="76" y="939" fill="#e02828" font-size="10" font-family="Roboto, sans-serif">x</text>
      </svg>
      <div class="persp">persp</div>
    </div>`;
  }
}
customElements.define('m-viewport', MViewport);

class MSidepanel extends HTMLElement {
  constructor() {
    super();
    this.attachShadow({mode: 'open'}).innerHTML = `<style>
      :host { display: flex; flex-direction: column; flex: none; width: 373px; margin-left: 10px; box-sizing: border-box; }
      .head { display: flex; align-items: center; height: 20px; gap: 14px; padding: 0 0 0 1px; font-size: 9px; color: #b8b8b8; }
      .dots { flex: 1; height: 3px; background: repeating-linear-gradient(90deg, #6e6e6e 0 1px, transparent 1px 2px); }
      .btns { display: flex; gap: 2px; margin-left: -6px; }
      .btns m-icon { --w: 13px; --h: 14px; background: #333; border-radius: 2px; }
      .ax { display: flex; justify-content: flex-end; gap: 5px; height: 16px; align-items: center; padding-right: 4px; }
      .mn { display: flex; gap: 14px; height: 22px; align-items: center; padding-left: 7px; color: #c0c0c0; }
      .box1 { height: 473px; background: #2a2a2a; margin-right: 2px; }
      .rule { height: 1px; background: #333; margin: 4px 0 7px; }
      .tabs { display: flex; gap: 2px; height: 20px; }
      .tabs span { background: #393939; color: #999; display: flex; align-items: center; justify-content: center; border-radius: 2px 2px 0 0; }
      .tabs .on { background: #636363; color: #dcdcdc; }
      .low { flex: 1; border: 1px solid #333; margin: 0 1px 4px 0; display: flex; flex-direction: column; border-bottom: 0; }
      .lm { display: flex; gap: 12.500px; height: 22px; align-items: center; padding-left: 8px; color: #bdbdbd; }
      .li { display: flex; justify-content: flex-end; gap: 6.500px; height: 21px; align-items: center; padding-right: 8px; }
      .list { flex: 1; background: #2a2a2a; margin: 0 3px 2px; padding: 5px 2px; }
      .layer { display: flex; align-items: center; gap: 3px; color: #dedede; }
      .layer b { width: 19px; height: 13px; background: #343434; display: flex; align-items: center; justify-content: center; font-weight: 400; font-size: 10px; border-radius: 2px; }
      .layer i { width: 15px; height: 13px; background: #a5072f; }
    </style>
    <div class="head"><div class="dots"></div><span>Channel Box / Layer Editor</span><div class="dots"></div>
      <div class="btns"><m-icon name="float" box="16" size="11"></m-icon><m-icon name="close" box="16" size="11"></m-icon></div></div>
    <div class="ax">${run('axis anim slashr', 16)}</div>
    <div class="mn"><span>Channels</span><span>Edit</span><span>Object</span><span>Show</span></div>
    <div class="box1"></div>
    <div class="rule"></div>
    <div class="tabs"><span class="on" style="width:57px">Display</span><span style="width:55px">Render</span><span style="width:45px">Anim</span></div>
    <div class="low">
      <div class="lm"><span>Layers</span><span>Options</span><span>Help</span></div>
      <div class="li">${run('l_up l_down', 16, 14)}<span style="width:4px"></span>${run('l_new l_sel', 16, 14)}</div>
      <div class="list"><div class="layer"><b>V</b><b>P</b><b></b><i></i><span>Low_Shelf_White</span></div></div>
    </div>`;
  }
}
customElements.define('m-sidepanel', MSidepanel);

class MVtabs extends HTMLElement {
  constructor() {
    super();
    this.attachShadow({mode: 'open'}).innerHTML = `<style>
      :host { display: flex; flex-direction: column; flex: none; width: 20px; }
      div { writing-mode: vertical-rl; display: flex; justify-content: center; align-items: center; font-size: 10px; letter-spacing: .4px; color: #aaa; width: 20px; }
      .on { background: #5c5c5c; height: 148px; color: #d8d8d8; }
      .off { height: 90px; margin-top: 5px; }
    </style><div class="on">Channel Box / Layer Editor</div><div class="off">Attribute Editor</div>`;
  }
}
customElements.define('m-vtabs', MVtabs);

class MTimeline extends HTMLElement {
  constructor() {
    super();
    let cells = '';
    for (let i = 1; i <= 24; i++) {
      cells += `<div class="c${i === 1 ? ' cur' : ''}"><span class="n">${i}</span><span class="t">${i === 1 ? '<em>1</em>' : ''}</span></div>`;
    }
    const tp = 't_first t_prevk t_prevkey t_back t_play t_nextkey t_nextk t_last';
    this.attachShadow({mode: 'open'}).innerHTML = `<style>
      :host { display: flex; align-items: stretch; height: 28px; margin-top: 3px; padding-left: 5px; }
      .h { width: 3px; background: ${HANDLE}; margin-right: 8px; }
      .ruler { display: flex; width: 1526px; background: #2f2f2f; padding-left: 8px; box-sizing: border-box; }
      .c { width: 62.900px; flex: none; display: flex; flex-direction: column; font-size: 10px; color: #828282; box-sizing: border-box; }
      .n { height: 13px; padding-left: 11px; line-height: 13px; }
      .t { flex: 1; margin: 0 0 1px; border-left: 1px solid #909090; padding-left: 10px; position: relative; }
      .cur { background: #606060; }
      .cur .t { color: #ececec; font-size: 11px; }
      em { font-style: normal; }
      .time { width: 63px; height: 17px; background: #2b2b2b; margin: 7px 0 0 7px; color: #c8c8c8; line-height: 18px; padding-left: 5px; box-sizing: border-box; border-radius: 2px; }
      .tp { display: flex; align-items: center; margin-left: 6px; }
      .tp m-icon { --w: 21.500px; }
    </style><i class="h"></i><div class="ruler">${cells}</div><div class="time">1</div><div class="tp">${run(tp, 16)}</div>`;
  }
}
customElements.define('m-timeline', MTimeline);

class MRangebar extends HTMLElement {
  constructor() {
    super();
    this.attachShadow({mode: 'open'}).innerHTML = `<style>
      :host { display: flex; align-items: center; height: 21px; margin-top: 8px; padding-left: 5px; }
      .h { width: 3px; height: 21px; background: ${HANDLE}; margin-right: 9px; }
      .f { width: 63px; height: 21px; background: #2c2c2c; color: #c8c8c8; line-height: 21px; padding-left: 4px; box-sizing: border-box; margin-right: 8px; flex: none; border-radius: 2px; }
      .track { width: 1201px; height: 21px; background: #3c3c3c; margin: 0 6px 0 -1px; padding: 2px 7px; box-sizing: border-box; flex: none; }
      .range { width: 594px; height: 17px; background: #5f5f5f; border-radius: 2px; display: flex; align-items: center; padding: 0 3px; box-sizing: border-box; color: #c8c8c8; }
      .range i { width: 13px; height: 13px; background: #a8a8a8; border-radius: 2px; flex: none; }
      .range span { margin-left: 5px; flex: 1; }
      .range span + span { text-align: right; margin: 0 3px 0 0; }
      .tri { width: 20px; display: flex; justify-content: center; flex: none; }
      .drop { height: 21px; background: #404040; border: 1px solid #4d4d4d; box-sizing: border-box; line-height: 19px; padding-left: 5px; color: #b8b8b8; flex: none; border-radius: 2px; }
    </style><i class="h"></i><div class="f">1</div><div class="f">1</div>
      <div class="track"><div class="range"><i></i><span>1</span><span>24</span><i></i></div></div>
      <div class="f">24</div><div class="f" style="margin-right:0">48</div>
      <div class="tri"><m-icon name="tri" box="16" size="10"></m-icon></div>
      <div class="drop" style="width:96px">No Anim Layer</div>
      <div class="tri" style="width:26px"><m-icon name="tri" box="16" size="10"></m-icon></div>
      <div class="drop" style="width:95px;white-space:nowrap">No Character Set</div>
      <m-icon name="autokey" box="16" size="18" style="margin:0 10px 0 7px"></m-icon><m-icon name="runner" box="16" size="18"></m-icon>`;
  }
}
customElements.define('m-rangebar', MRangebar);

class MCmdline extends HTMLElement {
  constructor() {
    super();
    this.attachShadow({mode: 'open'}).innerHTML = `<style>
      :host { display: flex; align-items: center; height: 23px; margin-top: 9px; padding-left: 5px; border-bottom: 1px solid #343434; padding-bottom: 3px; }
      .h { width: 3px; height: 21px; background: ${HANDLE}; margin-right: 18px; }
      .lb { width: 33px; color: #ccc; }
      .a { width: 578px; height: 21px; background: #2d2d2d; border-radius: 2px; margin-right: 7px; }
      .b { width: 1124px; height: 23px; background: #2d2d2d; margin-right: 7px; }
    </style><i class="h"></i><span class="lb">MEL</span><div class="a"></div><div class="b"></div><m-icon name="script" box="16" size="18"></m-icon>`;
  }
}
customElements.define('m-cmdline', MCmdline);

class MHelpline extends HTMLElement {
  constructor() {
    super();
    this.attachShadow({mode: 'open'}).innerHTML = `<style>
      :host { display: flex; align-items: center; flex: 1; padding-left: 5px; font-size: 10px; color: #bcbcbc; }
      .h { width: 3px; height: 16px; background: ${HANDLE}; margin-right: 19px; }
    </style><i class="h"></i><slot></slot>`;
  }
}
customElements.define('m-helpline', MHelpline);
</script>
</body>
</html>
